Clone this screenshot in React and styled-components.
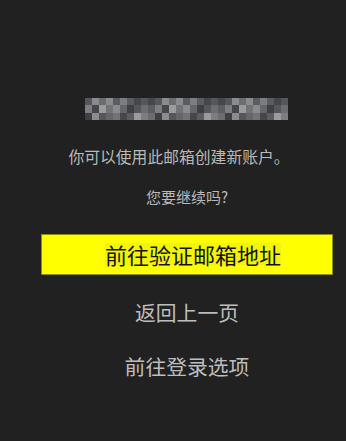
import React from 'react';
import styled, {createGlobalStyle} from 'styled-components';

const Global = createGlobalStyle`
html, body {
    margin: 0;
    padding: 0;
    background: #212121;
}
body {
    font-family: "Noto Sans CJK SC", "Noto Sans", sans-serif;
}
`

const Page = styled.div`
width: 346px;
height: 441px;
background: #212121;
display: flex;
flex-direction: column;
align-items: center;
padding-top: 98px;
padding-left: 28px;
box-sizing: border-box;
`

const Blur = styled.div`
display: grid;
grid-template-columns: repeat(29, 7px);
grid-auto-rows: 7.3px;
margin-right: 2px;
`

const Cell = styled.div`
background: ${({shade}) => shade};
`

const Info = styled.p`
margin: 0;
color: #b9b9b9;
font-size: ${({size}) => size}px;
line-height: 1;
margin-top: ${({top}) => top}px;
margin-right: ${({shift}) => shift || 0}px;
`

const MainButton = styled.button`
margin-top: 30px;
width: 292px;
height: 41px;
background: #ffff00;
border: 1px solid #8c8c10;
color: #141414;
font-family: inherit;
font-size: 22px;
padding: 0;
display: flex;
align-items: center;
justify-content: center;
padding-left: 12px;
cursor: pointer;

span {
    background: #f3f30c;
    line-height: 22px;
}
`

const TextLink = styled.button`
background: none;
border: none;
color: #bdbdbd;
font-family: inherit;
font-size: 20.8px;
line-height: 1;
padding: 0;
margin-top: ${({top}) => top}px;
cursor: pointer;
`

// fake pixelated email
const greys = ['#5a5c60', '#46474a', '#6b6d70', '#7c7d80', '#55565a', '#8a8b8e', '#3e3f42', '#727377', '#65666a', '#9a9b9d'];
const cells = [];
for (let r = 0; r < 3; r++) {
    for (let c = 0; c < 29; c++) {
        const i = (c * 7 + r * 3 + ((c * r) % 5)) % greys.length;
        let g = greys[i];
        if (r === 0) g = greys[(i + 4) % 6];
        cells.push(g);
    }
}

const App = () => {
    return(
        <Page>
            <Global/>
            <Blur>
                {cells.map((g, i) => <Cell key={i} shade={g}/>)}
            </Blur>
            <Info size={15.8} top={29} shift={16}>你可以使用此邮箱创建新账户。</Info>
            <Info size={15} top={24}>您要继续吗?</Info>
            <MainButton><span>前往验证邮箱地址</span></MainButton>
            <TextLink top={27}>返回上一页</TextLink>
            <TextLink top={34}>前往登录选项</TextLink>
        </Page>
    )
}

export default App;
